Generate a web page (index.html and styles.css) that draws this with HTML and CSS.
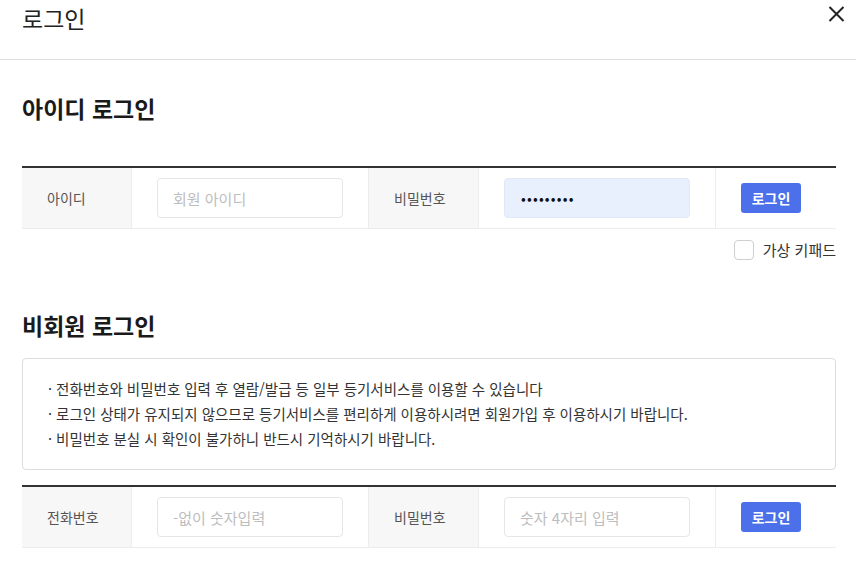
FILE: index.html
```html
<!DOCTYPE html>
<html lang="ko">
<head>
<meta charset="utf-8">
<link rel="stylesheet" href="styles.css">
</head>
<body>
<div class="modal">
  <header class="modal-header">
    <h1 class="modal-title">로그인</h1>
    <button class="close" aria-label="닫기">
      <svg width="17" height="16" viewBox="0 0 17 16"><path d="M1.5 1 L15.5 15 M15.5 1 L1.5 15" stroke="#222" stroke-width="2" fill="none"/></svg>
    </button>
  </header>
  <main class="modal-body">
    <h2 class="section-title">아이디 로그인</h2>
    <div class="form-row">
      <div class="cell label">아이디</div>
      <div class="cell field"><input class="input" type="text" placeholder="회원 아이디"></div>
      <div class="cell label">비밀번호</div>
      <div class="cell field"><div class="input filled">•••••••••</div></div>
      <div class="cell action"><button class="btn">로그인</button></div>
    </div>
    <label class="keypad"><span class="checkbox"></span><span>가상 키패드</span></label>

    <h2 class="section-title second">비회원 로그인</h2>
    <div class="notice">
      <p>· 전화번호와 비밀번호 입력 후 열람/발급 등 일부 등기서비스를 이용할 수 있습니다</p>
      <p>· 로그인 상태가 유지되지 않으므로 등기서비스를 편리하게 이용하시려면 회원가입 후 이용하시기 바랍니다.</p>
      <p>· 비밀번호 분실 시 확인이 불가하니 반드시 기억하시기 바랍니다.</p>
    </div>
    <div class="form-row guest">
      <div class="cell label">전화번호</div>
      <div class="cell field"><input class="input" type="text" placeholder="-없이 숫자입력"></div>
      <div class="cell label">비밀번호</div>
      <div class="cell field"><input class="input" type="text" placeholder="숫자 4자리 입력"></div>
      <div class="cell action"><button class="btn">로그인</button></div>
    </div>
  </main>
</div>
</body>
</html>
```

FILE: styles.css
```css
* { box-sizing: border-box; }
html, body { margin: 0; padding: 0; background: #fff; }
body {
  font-family: "Noto Sans CJK KR", "Noto Sans", sans-serif;
  color: #222;
}
.modal { width: 856px; }
.modal-header {
  height: 60px;
  border-bottom: 1px solid #dedede;
  display: flex;
  justify-content: space-between;
  align-items: flex-start;
  padding: 0 11px 0 22px;
}
.modal-title {
  margin: 0;
  font-size: 23px;
  font-weight: 400;
  line-height: 30px;
  padding-top: 3px;
  color: #222;
}
.close {
  border: 0;
  background: none;
  padding: 0;
  margin-top: 6px;
  width: 17px;
  height: 16px;
  cursor: pointer;
}
.close svg { display: block; }
.modal-body { padding: 0 20px 0 22px; }
.section-title {
  margin: 33px 0 0;
  font-size: 23px;
  font-weight: 700;
  line-height: 30px;
  color: #1a1a1a;
}
.section-title.second { margin-top: 50px; }
.form-row {
  margin-top: 43px;
  display: grid;
  grid-template-columns: 110px 237px 110px 237px 120px;
  border-top: 2px solid #333;
  border-bottom: 1px solid #ececec;
  height: 63px;
}
.form-row.guest { margin-top: 15px; }
.cell {
  display: flex;
  align-items: center;
  border-right: 1px solid #ececec;
}
.cell:last-child { border-right: 0; }
.label {
  background: #f7f7f7;
  padding-left: 25px;
  font-size: 14px;
  color: #555;
}
.field { padding-left: 25px; }
.input {
  width: 186px;
  height: 40px;
  border: 1px solid #e6e6e6;
  border-radius: 4px;
  padding: 0 0 0 15px;
  font-family: inherit;
  font-size: 15px;
  color: #222;
  background: #fff;
  outline: none;
  display: flex;
  align-items: center;
}
.input::placeholder { color: #bdbdbd; }
.input.filled {
  background: #e8f0fe;
  border-color: #e2e8f3;
  padding-left: 16px;
  font-size: 14px;
  letter-spacing: 1.2px;
  color: #111;
}
.action { padding-left: 25px; }
.btn {
  width: 60px;
  height: 30px;
  border: 0;
  border-radius: 3px;
  background: #4b70ea;
  color: #fff;
  font-family: inherit;
  font-size: 14px;
  font-weight: 700;
  padding: 0;
}
.keypad {
  display: flex;
  justify-content: flex-end;
  align-items: center;
  gap: 9px;
  margin-top: 10px;
  font-size: 15px;
  color: #333;
  height: 21px;
}
.checkbox {
  width: 20px;
  height: 20px;
  border: 1px solid #cfcfcf;
  border-radius: 4px;
  background: #fff;
}
.notice {
  margin-top: 18px;
  border: 1px solid #dcdcdc;
  border-radius: 4px;
  padding: 17px 25px 18px;
  height: 112px;
}
.notice p {
  margin: 0;
  font-size: 14.5px;
  line-height: 25px;
  color: #333;
}
```
